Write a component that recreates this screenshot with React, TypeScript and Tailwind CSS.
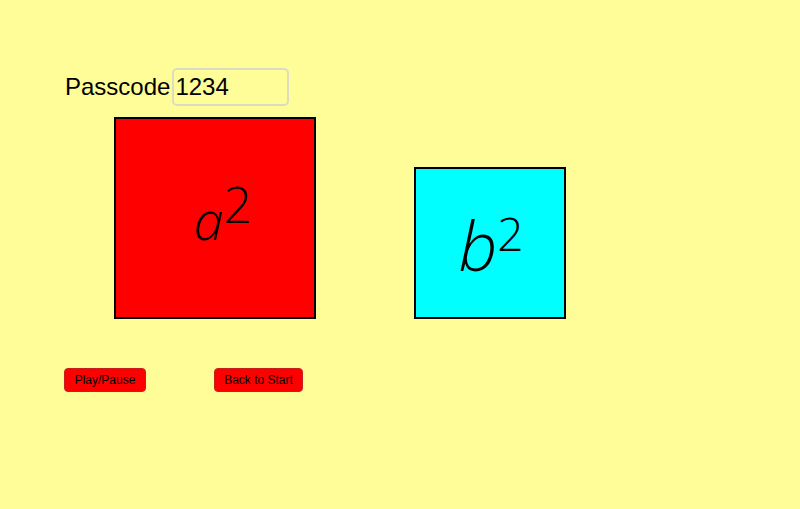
import React from "react";

export default function App() {
  return (
    <div
      className="w-[800px] h-[509px] bg-[#fffd98] pt-[68px] pl-[64px] overflow-hidden"
      style={{ fontFamily: '"Liberation Sans", Arial, sans-serif' }}
    >
      <div className="flex items-center h-[38px]">
        <span className="text-[24px] text-black ml-[1px] leading-none">Passcode</span>
        <input
          defaultValue="1234"
          className="ml-[2px] w-[117px] h-[38px] border-2 border-[#dcdcc4] rounded-[5px] bg-transparent px-[1px] text-[24px] text-black outline-none"
          style={{ fontFamily: '"Liberation Sans", Arial, sans-serif' }}
        />
      </div>
      <div className="flex items-end mt-[11px] ml-[50px]">
        <div className="w-[202px] h-[202px] border-2 border-black bg-[#ff0000] flex items-center justify-center">
          <span className="flex items-start text-black ml-[16px] mt-[2px]" style={{ fontFamily: '"Open Sans", sans-serif' }}>
            <span className="italic font-light text-[54px] leading-none">a</span>
            <span className="text-[50px] leading-none font-light -mt-[13px] ml-[0px]">2</span>
          </span>
        </div>
        <div className="ml-[98px] w-[152px] h-[152px] border-2 border-black bg-[#00ffff] flex items-center justify-center">
          <span className="flex items-start text-black ml-[2px] mt-[4px]" style={{ fontFamily: '"Open Sans", sans-serif' }}>
            <span className="italic font-light text-[68px] leading-none">b</span>
            <span className="text-[46px] leading-none font-light -mt-[1px] ml-[0px]">2</span>
          </span>
        </div>
      </div>
      <div className="flex mt-[49px]">
        <button className="w-[82px] h-[24px] bg-[#ff0000] border border-[#c81e1e] rounded-[4px] text-[12px] text-black">
          Play/Pause
        </button>
        <button className="ml-[68px] w-[89px] h-[24px] bg-[#ff0000] border border-[#c81e1e] rounded-[4px] text-[12px] text-black">
          Back to Start
        </button>
      </div>
    </div>
  );
}
